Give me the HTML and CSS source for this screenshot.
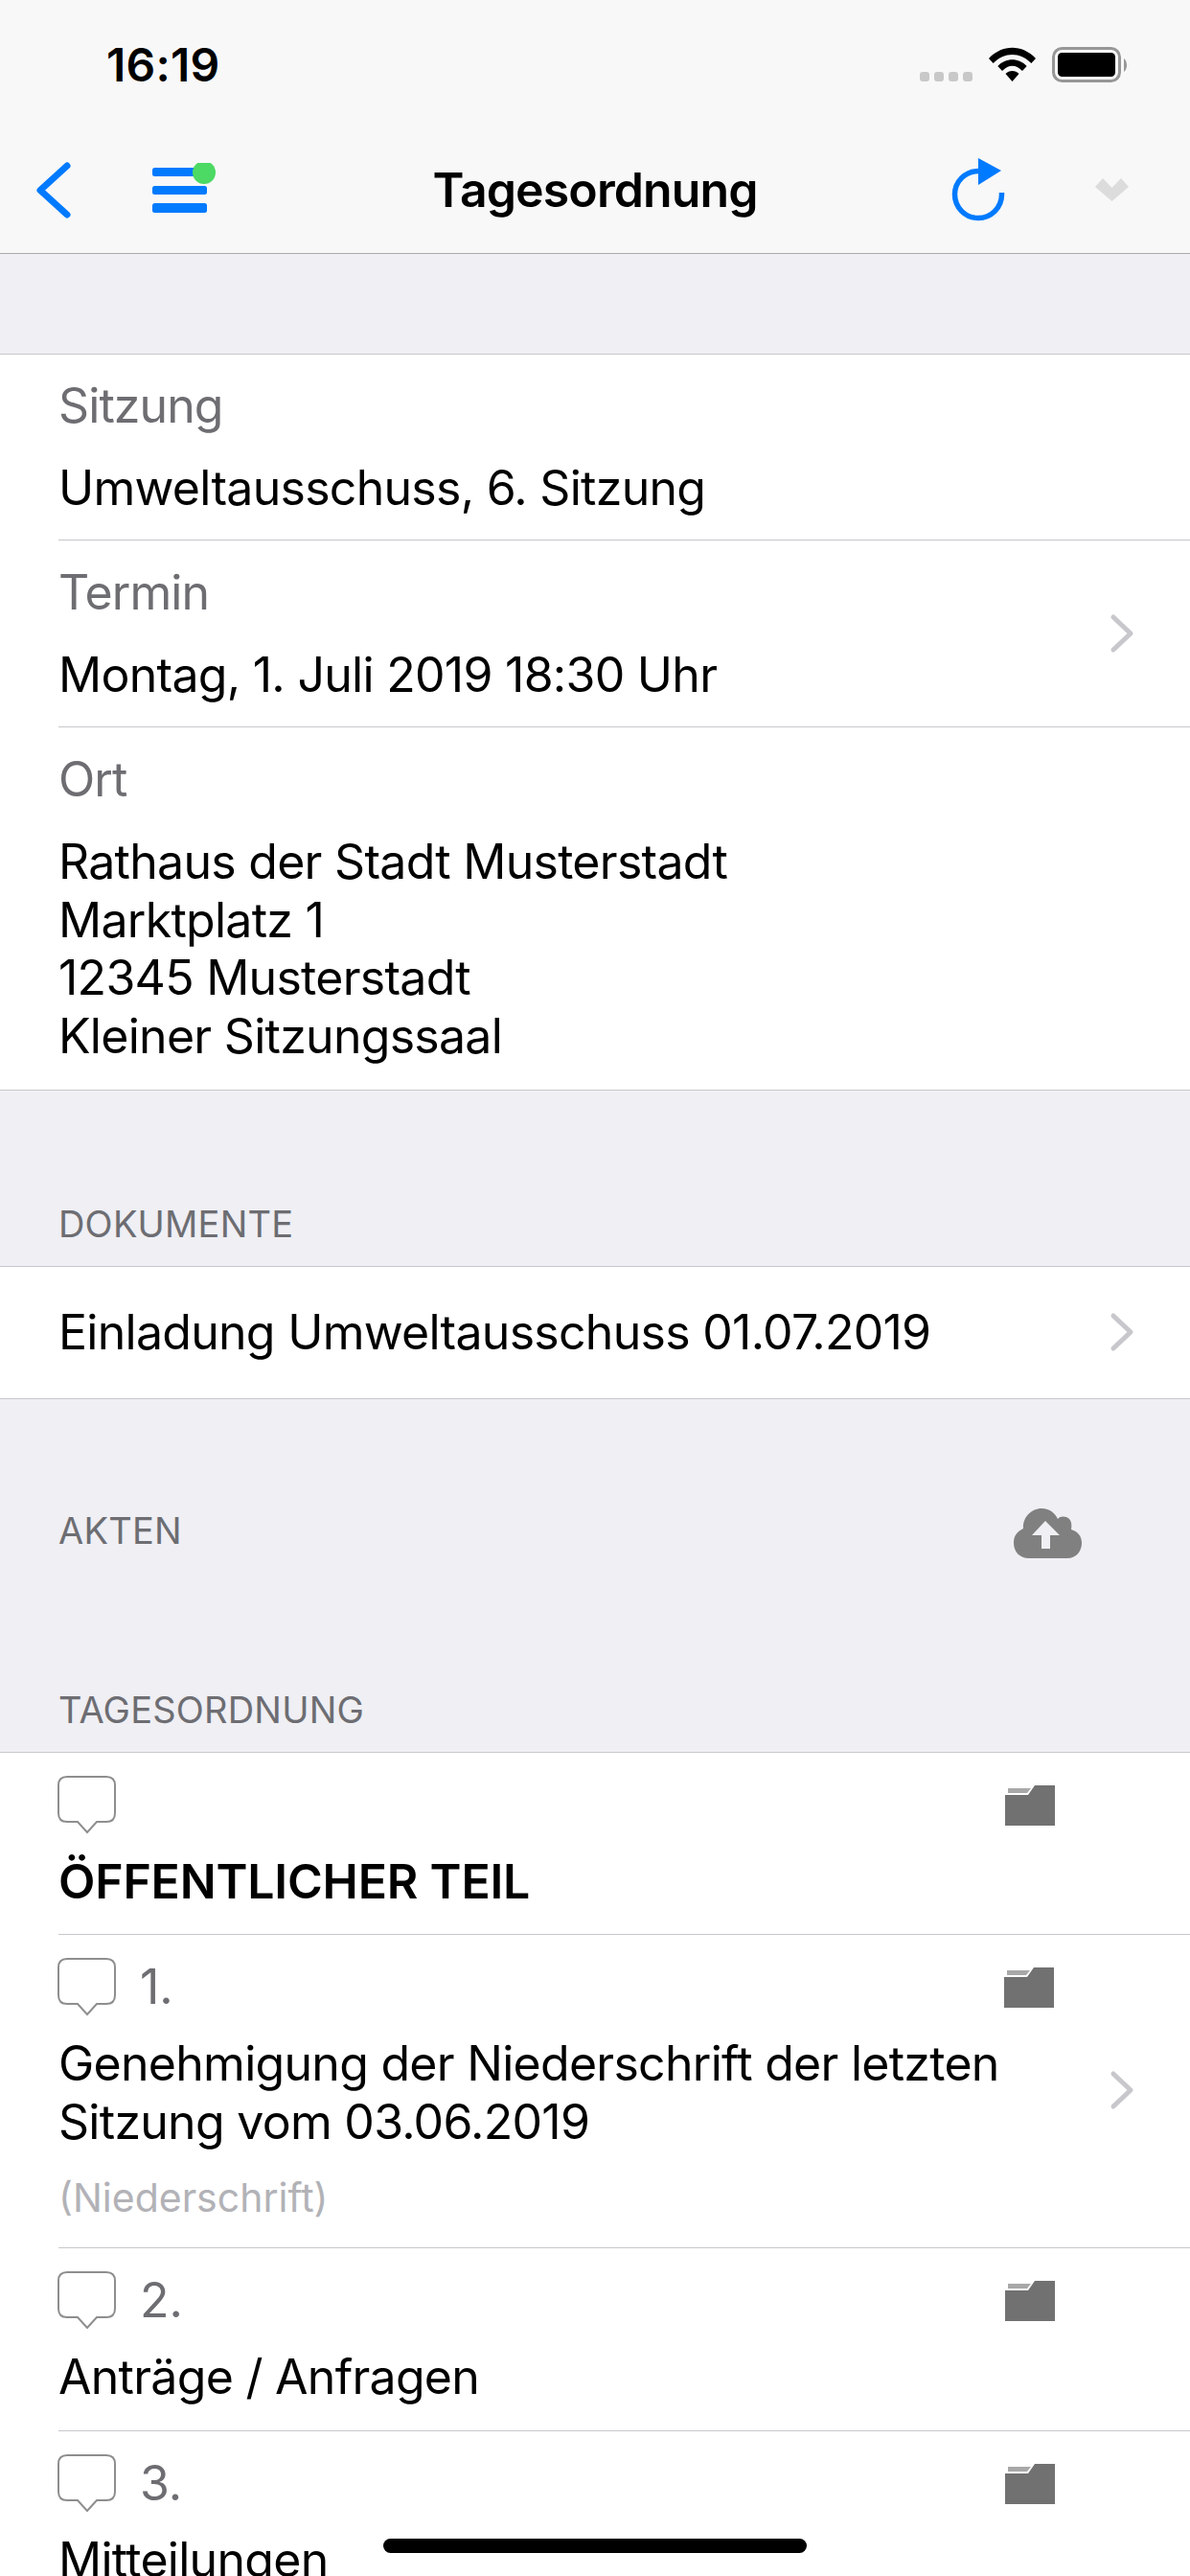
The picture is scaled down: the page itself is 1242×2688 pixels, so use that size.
FILE: index.html
```html
<!DOCTYPE html>
<html>
	<head>
		<meta charset="utf-8">
		<meta name="viewport" content="width=device-width">
		<title>Tagesordnung</title>
		<link rel="stylesheet" href="styles.css">
	</head>
	<body>
		<svg class="sprites" width="0" height="0">
			<symbol id="chev" viewBox="0 0 26 42"><path d="M4 4L22 21L4 38" fill="none" stroke="#c7c7cc" stroke-width="5" stroke-linecap="round" stroke-linejoin="round"/></symbol>
			<symbol id="bubble" viewBox="0 0 62 62"><path d="M10 2H51Q60 2 60 11V40Q60 49 51 49H41L31 60L21 49H10Q1 49 1 40V11Q1 2 10 2Z" fill="#fff" stroke="#8e8e8e" stroke-width="2"/></symbol>
			<symbol id="folder" viewBox="0 0 52 42"><path d="M3 3H27L23 8H3Z" fill="#a8a8a8"/><path d="M0 10H24L31 0H52V42H0Z" fill="#717171"/></symbol>
		</svg>

		<header class="topbar">
			<div class="status">
				<span class="clock">16:19</span>
				<div class="status_icons">
					<span class="signal"><i></i><i></i><i></i><i></i></span>
					<svg class="wifi" width="49" height="37" viewBox="0 0 42 37" preserveAspectRatio="none"><path d="M0 12C12 -3 30 -3 42 12L38 17C28 5 14 5 4 17Z"/><path d="M8 20C15 11 27 11 34 20L30 25C24 18 18 18 12 25Z"/><path d="M15 28C18 24 24 24 27 28L21 36Z"/></svg>
					<svg class="battery" width="79" height="38" viewBox="0 0 79 38"><rect x="1.5" y="1.5" width="69" height="34" rx="9" fill="none" stroke="#979797" stroke-width="3"/><rect x="6" y="6" width="60" height="25" rx="4.5"/><path d="M75 12C79 15 79 23 75 26Z" fill="#979797"/></svg>
				</div>
			</div>
			<nav class="navbar">
				<div class="nav_left">
					<svg class="back" width="39" height="66" viewBox="0 0 39 66"><path d="M33 8L5 33.5L33 59" fill="none" stroke="#007aff" stroke-width="7" stroke-linecap="round" stroke-linejoin="round"/></svg>
					<svg class="menu" width="66" height="56" viewBox="0 0 66 56"><rect x="0" y="5" width="57" height="9" rx="2.5" fill="#007aff"/><rect x="0" y="24" width="57" height="9" rx="2.5" fill="#007aff"/><rect x="0" y="42" width="57" height="10" rx="2.5" fill="#007aff"/><ellipse cx="54" cy="10" rx="12" ry="12" fill="#4cd964"/></svg>
				</div>
				<h1 class="title">Tagesordnung</h1>
				<div class="nav_right">
					<svg class="reload" width="60" height="70" viewBox="0 0 60 70"><path d="M30 15.5A24.5 24.5 0 1 0 54.5 40V38" fill="none" stroke="#007aff" stroke-width="5.5"/><path d="M30 2L54 15L30 30Z" fill="#007aff"/></svg>
					<svg class="down" width="35" height="24" viewBox="0 0 35 24"><path d="M0 9L8 0L17.5 10L27 0L35 9L17.5 24Z" fill="#dcdcdc"/></svg>
				</div>
			</nav>
		</header>

		<div class="gap gap_top"></div>

		<section class="group">
			<div class="row row_session">
				<div class="main">
					<div class="label">Sitzung</div>
					<div class="value">Umweltausschuss, 6. Sitzung</div>
				</div>
			</div>
			<div class="row">
				<div class="main">
					<div class="label">Termin</div>
					<div class="value">Montag, 1. Juli 2019 18:30 Uhr</div>
				</div>
				<svg class="chev"><use href="#chev"/></svg>
			</div>
			<div class="row row_place">
				<div class="main">
					<div class="label">Ort</div>
					<div class="value">Rathaus der Stadt Musterstadt<br>Marktplatz 1<br>12345 Musterstadt<br>Kleiner Sitzungssaal</div>
				</div>
			</div>
		</section>

		<div class="gap gap_docs"><span class="caption">DOKUMENTE</span></div>

		<section class="group">
			<div class="row row_single">
				<div class="main">
					<div class="value">Einladung Umweltausschuss 01.07.2019</div>
				</div>
				<svg class="chev"><use href="#chev"/></svg>
			</div>
		</section>

		<div class="gap gap_files">
			<div class="files_line">
				<span class="caption">AKTEN</span>
				<svg class="cloud" width="72" height="53" viewBox="0 0 72 53"><path d="M16 52C6 52 0 45 0 36C0 28 4 24 10 21C9 9 19 0 29 0C38 0 43 5 46 11C48 8 52 8 55 9C60 11 61 16 60 22C67 24 71 29 71 36C71 45 65 52 56 52Z" fill="#808080"/><path d="M29 42V28H19L33 13L48 28H38V42Z" fill="#f0eff4"/></svg>
			</div>
			<span class="caption">TAGESORDNUNG</span>
		</div>

		<section class="group">
			<div class="row agenda">
				<div class="main">
					<div class="num_line"><svg class="bubble"><use href="#bubble"/></svg></div>
					<div class="value heading">ÖFFENTLICHER TEIL</div>
				</div>
				<svg class="folder"><use href="#folder"/></svg>
			</div>
			<div class="row agenda">
				<div class="main">
					<div class="num_line"><svg class="bubble"><use href="#bubble"/></svg><span class="num">1.</span></div>
					<div class="value">Genehmigung der Niederschrift der letzten<br>Sitzung vom 03.06.2019</div>
					<div class="note">(Niederschrift)</div>
				</div>
				<svg class="folder"><use href="#folder"/></svg>
				<svg class="chev"><use href="#chev"/></svg>
			</div>
			<div class="row agenda">
				<div class="main">
					<div class="num_line"><svg class="bubble"><use href="#bubble"/></svg><span class="num">2.</span></div>
					<div class="value">Anträge / Anfragen</div>
				</div>
				<svg class="folder"><use href="#folder"/></svg>
			</div>
			<div class="row agenda">
				<div class="main">
					<div class="num_line"><svg class="bubble"><use href="#bubble"/></svg><span class="num">3.</span></div>
					<div class="value">Mitteilungen</div>
				</div>
				<svg class="folder"><use href="#folder"/></svg>
			</div>
		</section>

		<div class="home_bar"></div>
	</body>
</html>
```

FILE: styles.css
```css
html,body{
	margin:0;
	height:2688px;
	overflow:hidden;
}

body{
	position:relative;
	background:#fff;
	color:#000;
	font-family:Inter,"Liberation Sans",sans-serif;
	font-size:50px;
}

.sprites{
	display:block;
	height:0;
}

.topbar{
	height:264px;
	background:#f8f8f8;
	border-bottom:1px solid #a9a9ac;
}

.status{
	display:flex;
	justify-content:space-between;
	align-items:flex-start;
	height:132px;
	padding:44px 65px 0 111px;
	box-sizing:border-box;
}

.clock{
	font-size:48px;
	font-weight:600;
	line-height:48px;
	letter-spacing:0.2px;
}

.status_icons{
	display:flex;
	align-items:flex-start;
	gap:17px;
	padding-top:5px;
}

.signal{
	display:flex;
	gap:5px;
	padding-top:26px;
}

.signal i{
	display:block;
	width:10px;
	height:10px;
	border-radius:3px;
	background:#c8c8c8;
}

.wifi{
	display:block;
}

.battery{
	display:block;
}

.navbar{
	display:grid;
	grid-template-columns:1fr auto 1fr;
	align-items:center;
	height:132px;
}

.nav_left{
	display:flex;
	align-items:center;
	padding-left:37px;
	gap:83px;
}

.nav_right{
	display:flex;
	align-items:center;
	justify-content:flex-end;
	padding-right:64px;
	gap:92px;
}

.back,.menu,.reload,.down{
	display:block;
	flex:none;
}

.title{
	margin:0;
	font-size:50px;
	font-weight:600;
	letter-spacing:-0.9px;
	text-align:center;
	line-height:60px;
}

.gap{
	background:#efeff4;
	border-bottom:1px solid #c8c7cc;
	box-sizing:border-box;
}

.gap_top{
	height:105px;
}

.gap_docs{
	display:flex;
	align-items:flex-end;
	height:184px;
	padding:0 61px 22px;
}

.gap_files{
	height:369px;
	padding:0 0 22px 61px;
	display:flex;
	flex-direction:column;
	justify-content:flex-end;
}

.files_line{
	display:flex;
	justify-content:space-between;
	align-items:center;
	padding-right:112px;
	margin-bottom:135px;
}

.caption{
	font-size:38px;
	line-height:44px;
	letter-spacing:0.2px;
	color:#6d6d72;
}

.cloud{
	display:block;
	margin-top:6px;
}

.group{
	background:#fff;
	border-bottom:1px solid #c8c7cc;
}

.row{
	display:flex;
	align-items:center;
	margin-left:61px;
	padding:24px 0;
	border-bottom:1px solid #c8c7cc;
}

.row_session{
	padding:23px 0;
}

.row_place{
	padding-bottom:26px;
}

.group .row:last-child{
	border-bottom:0;
}

.row_single{
	padding:38px 0;
}

.main{
	flex:1;
	min-width:0;
}

.label{
	font-size:50px;
	line-height:60px;
	letter-spacing:-0.9px;
	color:#6d6d72;
	margin-bottom:26px;
}

.value{
	font-size:50px;
	line-height:60.5px;
	letter-spacing:-0.72px;
	white-space:nowrap;
}

.value.heading{
	font-weight:600;
	letter-spacing:-0.2px;
}

.chev{
	flex:none;
	width:26px;
	height:42px;
	margin-right:58px;
}

.agenda{
	padding:23px 0 25px;
}

.num_line{
	display:flex;
	align-items:center;
	height:62px;
	margin-bottom:19px;
}

.bubble{
	flex:none;
	width:62px;
	height:62px;
	margin-left:-1px;
}

.num{
	margin-left:24px;
	font-size:50px;
	color:#6d6d72;
}

.note{
	margin:25px 0 3px;
	font-size:41px;
	line-height:48px;
	color:#b2b2b7;
}

.folder{
	flex:none;
	align-self:flex-start;
	width:52px;
	height:42px;
	margin-top:11px;
	margin-right:141px;
}

.folder + .chev{
	margin-left:-83px;
}

.home_bar{
	position:absolute;
	left:400px;
	bottom:24px;
	width:442px;
	height:15px;
	border-radius:8px;
	background:#000;
}
```
